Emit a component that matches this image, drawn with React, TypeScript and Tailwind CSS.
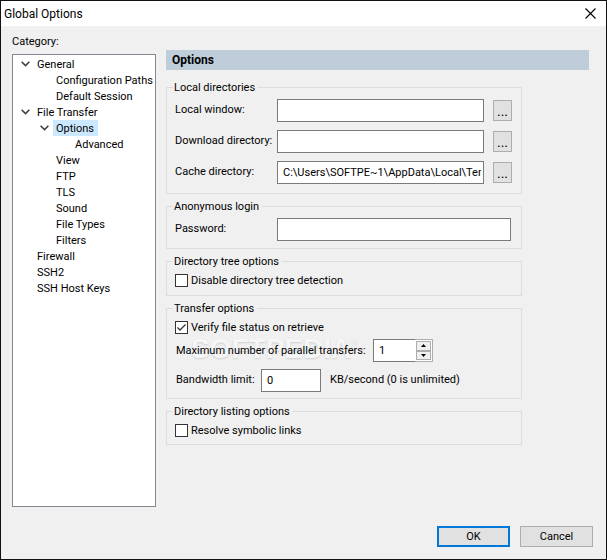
import React, { useState } from 'react';

type TreeNode = {
  label: string;
  children?: TreeNode[];
};

const categories: TreeNode[] = [
  {
    label: 'General',
    children: [{ label: 'Configuration Paths' }, { label: 'Default Session' }],
  },
  {
    label: 'File Transfer',
    children: [
      { label: 'Options', children: [{ label: 'Advanced' }] },
      { label: 'View' },
      { label: 'FTP' },
      { label: 'TLS' },
      { label: 'Sound' },
      { label: 'File Types' },
      { label: 'Filters' },
    ],
  },
  { label: 'Firewall' },
  { label: 'SSH2' },
  { label: 'SSH Host Keys' },
];

const inputClass = 'h-[23px] min-w-0 border border-[#7a7a7a] bg-white pb-px pl-[5px] pr-0.5 outline-none';

const Chevron: React.FC = () => (
  <svg width="9" height="6" viewBox="0 0 9 6" fill="none" stroke="#404040" strokeWidth="1.6">
    <path d="M0.6 0.8 L4.5 4.6 L8.4 0.8" />
  </svg>
);

type TreeProps = {
  nodes: TreeNode[];
  selected: string;
  onSelect: (label: string) => void;
  nested?: boolean;
};

const Tree: React.FC<TreeProps> = ({ nodes, selected, onSelect, nested }) => (
  <ul className={nested ? 'pl-[19px]' : 'pl-2'}>
    {nodes.map((node) => (
      <li key={node.label}>
        <div className="flex h-4 items-center">
          <span className="flex w-[13px] shrink-0">{node.children && <Chevron />}</span>
          <button
            type="button"
            onClick={() => onSelect(node.label)}
            className={`h-4 whitespace-nowrap pl-[3px] pr-1 pt-0.5 ${selected === node.label ? 'bg-[#cce8ff]' : ''}`}
          >
            {node.label}
          </button>
        </div>
        {node.children && <Tree nodes={node.children} selected={selected} onSelect={onSelect} nested />}
      </li>
    ))}
  </ul>
);

const Group: React.FC<{ title: string; className?: string; children: React.ReactNode }> = ({
  title,
  className = '',
  children,
}) => (
  <fieldset className={`min-w-0 border border-[#dcdcdc] pl-2 pr-[9px] ${className}`}>
    <legend className="-ml-0.5 h-3.5 pl-px pr-[3px] leading-4">{title}</legend>
    {children}
  </fieldset>
);

const DirectoryRow: React.FC<{ id: string; label: string; value?: string }> = ({ id, label, value = '' }) => (
  <div className="flex items-center">
    <label htmlFor={id} className="w-[102px] shrink-0 pb-px">{label}</label>
    <input id={id} type="text" defaultValue={value} className={`${inputClass} flex-1`} />
    <button
      type="button"
      aria-label={`Browse ${label}`}
      className="ml-[9px] h-[21px] w-[19px] shrink-0 border border-[#adadad] bg-[#e1e1e1] text-sm leading-3"
    >
      ...
    </button>
  </div>
);

const CheckRow: React.FC<{ label: string; checked?: boolean }> = ({ label, checked }) => (
  <label className="flex h-[13px] items-center gap-[3px]">
    <span className="relative flex h-[13px] w-[13px] shrink-0">
      <input
        type="checkbox"
        defaultChecked={checked}
        className="peer h-[13px] w-[13px] appearance-none border border-[#333] bg-white"
      />
      <svg
        className="pointer-events-none absolute inset-0 hidden peer-checked:block"
        width="13"
        height="13"
        viewBox="0 0 13 13"
        fill="none"
        stroke="#333"
        strokeWidth="1.3"
      >
        <path d="M2.5 6.5 L5 9 L10.5 3.5" />
      </svg>
    </span>
    <span className="pt-px">{label}</span>
  </label>
);

const App: React.FC = () => {
  const [selected, setSelected] = useState('Options');
  const [transfers, setTransfers] = useState(1);

  return (
    <div className="flex min-h-screen flex-col border border-[#111] bg-[#f0f0f0] font-['Roboto',sans-serif] text-[11px] leading-[14px] text-black">
      {/* Title bar */}
      <header className="flex h-[25px] items-center justify-between bg-white pl-[3px] pr-2.5">
        <h1 className="text-xs">Global Options</h1>
        <button type="button" aria-label="Close">
          <svg width="11" height="11" viewBox="0 0 11 11" stroke="#000" strokeWidth="1.1">
            <path d="M0.5 0.5 L10.5 10.5 M10.5 0.5 L0.5 10.5" />
          </svg>
        </button>
      </header>

      <main className="flex flex-1 gap-2.5 pl-[11px] pr-[17px] pt-[9px]">
        {/* Category tree */}
        <nav className="flex w-36 shrink-0 flex-col">
          <h2 className="mb-[5px]">Category:</h2>
          <div className="flex-1 border border-[#828790] bg-white pt-px">
            <Tree nodes={categories} selected={selected} onSelect={setSelected} />
          </div>
        </nav>

        {/* Settings page */}
        <section className="min-w-0 flex-1 pt-[15px]">
          <h2 className="h-5 bg-[#bfcddb] pl-1.5 text-xs font-bold leading-5">Options</h2>

          <form className="mr-[67px] mt-2.5 flex flex-col gap-[5px]">
            <Group title="Local directories" className="pb-[9px]">
              <div className="flex flex-col gap-2 pt-[5px]">
                <DirectoryRow id="local-window" label="Local window:" />
                <DirectoryRow id="download-dir" label="Download directory:" />
                <DirectoryRow id="cache-dir" label="Cache directory:" value="C:\Users\SOFTPE~1\AppData\Local\Temp" />
              </div>
            </Group>

            <Group title="Anonymous login" className="pb-[7px]">
              <div className="flex items-center pr-px pt-[5px]">
                <label htmlFor="password" className="w-[102px] shrink-0 pb-px">Password:</label>
                <input id="password" type="password" className={`${inputClass} flex-1`} />
              </div>
            </Group>

            <Group title="Directory tree options" className="pb-2">
              <div className="pt-1.5">
                <CheckRow label="Disable directory tree detection" />
              </div>
            </Group>

            <Group title="Transfer options" className="pb-1.5">
              <div className="relative pt-1.5">
                {/* Watermark */}
                <div className="pointer-events-none absolute left-4 top-5 flex font-['Liberation_Sans',sans-serif] text-[28px] font-bold leading-7 text-[#f6f6f6] [text-shadow:0_1px_2px_rgba(0,0,0,0.14)]">
                  SOFTPEDIA
                  <span className="text-[9px] leading-3">®</span>
                </div>

                <CheckRow label="Verify file status on retrieve" checked />
                <div className="relative mt-[5px] flex items-center pl-px">
                  <label htmlFor="transfers" className="w-[197px] shrink-0">Maximum number of parallel transfers:</label>
                  <input
                    id="transfers"
                    type="text"
                    value={transfers}
                    onChange={(e) => setTransfers(Number(e.target.value) || 0)}
                    className={`${inputClass} w-[42px] border-r-0`}
                  />
                  <div className="flex h-[23px] w-[18px] flex-col border border-l-0 border-[#adadad] bg-white p-px">
                    <button
                      type="button"
                      aria-label="Increase"
                      onClick={() => setTransfers(transfers + 1)}
                      className="flex flex-1 items-center justify-center border border-[#adadad] bg-[#f0f0f0]"
                    >
                      <svg width="5" height="3" viewBox="0 0 5 3"><path d="M0 3 L2.5 0 L5 3 Z" /></svg>
                    </button>
                    <button
                      type="button"
                      aria-label="Decrease"
                      onClick={() => setTransfers(Math.max(1, transfers - 1))}
                      className="flex flex-1 items-center justify-center border border-[#adadad] bg-[#f0f0f0]"
                    >
                      <svg width="5" height="3" viewBox="0 0 5 3"><path d="M0 0 L2.5 3 L5 0 Z" /></svg>
                    </button>
                  </div>
                </div>
                <div className="relative mt-[7px] flex items-center pl-px">
                  <label htmlFor="bandwidth" className="w-[85px] shrink-0 pb-px">Bandwidth limit:</label>
                  <input id="bandwidth" type="text" defaultValue="0" className={`${inputClass} w-[60px]`} />
                  <span className="pb-px pl-[9px]">KB/second (0 is unlimited)</span>
                </div>
              </div>
            </Group>

            <Group title="Directory listing options" className="pb-[7px]">
              <div className="pt-1.5">
                <CheckRow label="Resolve symbolic links" />
              </div>
            </Group>
          </form>
        </section>
      </main>

      <footer className="flex justify-end gap-2.5 pb-3 pr-[13px] pt-[19px]">
        <button type="button" className="h-[21px] w-[73px] border-2 border-[#0078d7] bg-[#e1e1e1] pt-px">OK</button>
        <button type="button" className="h-[21px] w-[73px] border border-[#adadad] bg-[#e1e1e1] pt-px">Cancel</button>
      </footer>
    </div>
  );
};

export default App;
